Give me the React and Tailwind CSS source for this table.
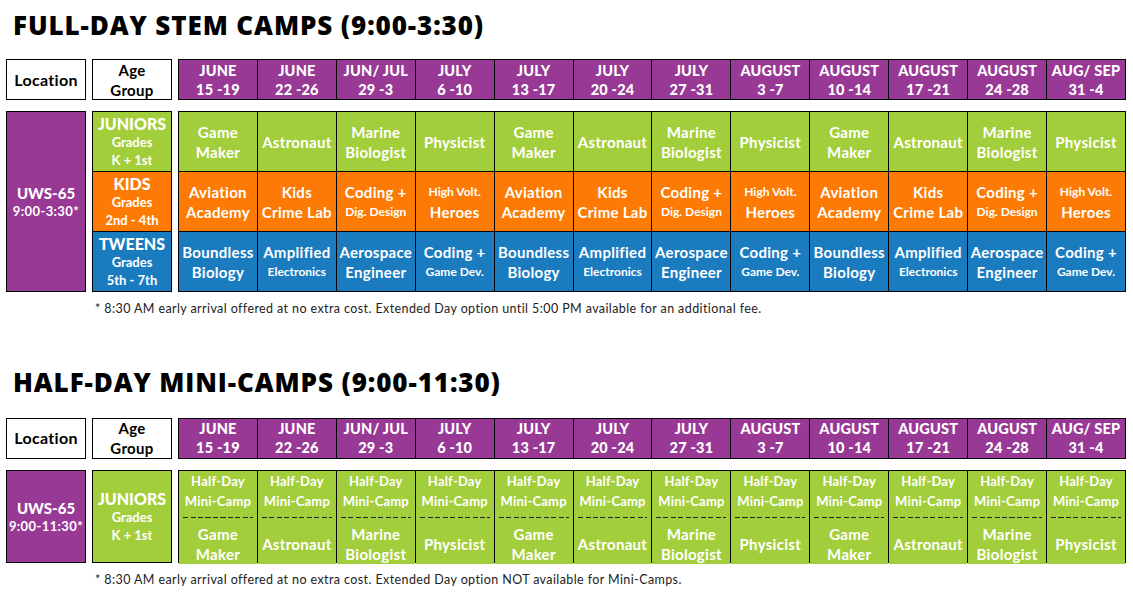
const weeks = [
  ['JUNE', '15 -19'],
  ['JUNE', '22 -26'],
  ['JUN/ JUL', '29 -3'],
  ['JULY', '6 -10'],
  ['JULY', '13 -17'],
  ['JULY', '20 -24'],
  ['JULY', '27 -31'],
  ['AUGUST', '3 -7'],
  ['AUGUST', '10 -14'],
  ['AUGUST', '17 -21'],
  ['AUGUST', '24 -28'],
  ['AUG/ SEP', '31 -4'],
];

// each camp: list of [text, small]
const juniors = [
  [['Game'], ['Maker']],
  [['Astronaut']],
  [['Marine'], ['Biologist']],
  [['Physicist']],
];
const kids = [
  [['Aviation'], ['Academy']],
  [['Kids'], ['Crime Lab']],
  [['Coding +'], ['Dig. Design', true]],
  [['High Volt.', true], ['Heroes']],
];
const tweens = [
  [['Boundless'], ['Biology']],
  [['Amplified'], ['Electronics', true]],
  [['Aerospace'], ['Engineer']],
  [['Coding +'], ['Game Dev.', true]],
];

const repeat = (arr) => [...arr, ...arr, ...arr];

const rows = [
  { name: 'JUNIORS', grades: 'K + 1st', bg: 'bg-[#a3ce3b]', camps: repeat(juniors) },
  { name: 'KIDS', grades: '2nd - 4th', bg: 'bg-[#fd7b04]', camps: repeat(kids) },
  { name: 'TWEENS', grades: '5th - 7th', bg: 'bg-[#1b7bbf]', camps: repeat(tweens) },
];

function Title({ children }) {
  return (
    <h1
      className="pl-[7px] text-[26px] font-extrabold leading-none tracking-[0.9px] text-black"
      style={{ fontFamily: '"Open Sans", Lato, sans-serif' }}
    >
      {children}
    </h1>
  );
}

function HeaderRow() {
  return (
    <div className="flex gap-[6px]">
      <div className="w-[80px] h-[41px] border border-black bg-white flex items-center justify-center text-[16px] font-bold tracking-[0.3px]">
        Location
      </div>
      <div className="w-[80px] h-[41px] border border-black bg-white flex flex-col items-center justify-center text-[15px] font-bold leading-[20px] tracking-[0.3px]">
        <span>Age</span>
        <span>Group</span>
      </div>
      <div className="w-[948px] h-[41px] border border-black bg-black grid grid-cols-12 gap-px">
        {weeks.map(([m, d], i) => (
          <div key={i} className="bg-[#983996] text-white font-black text-[14.5px] leading-[19px] flex flex-col items-center justify-center tracking-[0.2px]">
            <span>{m}</span>
            <span>{d}</span>
          </div>
        ))}
      </div>
    </div>
  );
}

function Camp({ lines }) {
  return (
    <div className="flex flex-col items-center justify-center">
      {lines.map(([t, small], i) => (
        <span key={i} className={small ? 'text-[12px] leading-[20px]' : 'text-[15px] leading-[20px] tracking-[0.3px]'}>
          {t}
        </span>
      ))}
    </div>
  );
}

function Footnote({ children }) {
  return <p className="pl-[89px] text-[12.5px] tracking-[0.4px] text-[#222] leading-none">{children}</p>;
}

function Location({ time, h }) {
  return (
    <div className={`w-[80px] ${h} border border-black bg-[#983996] flex flex-col items-center justify-center`}>
      <span className="text-[15px] font-black leading-[20px]">UWS-65</span>
      <span className="text-[13px] font-bold leading-[17px] tracking-[0.4px]">{time}</span>
    </div>
  );
}

export default function App() {
  return (
    <div className="w-[1133px] h-[594px] bg-white pl-[6px] pt-[12px]" style={{ fontFamily: 'Lato, "Open Sans", sans-serif' }}>
      <Title>FULL-DAY STEM CAMPS (9:00-3:30)</Title>
      <div className="mt-[21px]">
        <HeaderRow />
      </div>

      <div className="mt-[11px] flex gap-[6px] text-white">
        <Location time="9:00-3:30*" h="h-[181px]" />
        <div className="w-[80px] h-[181px] border border-black bg-black flex flex-col gap-px">
          {rows.map((r) => (
            <div key={r.name} className={`flex-1 ${r.bg} flex flex-col items-center justify-center`}>
              <span className="text-[16px] font-black leading-[19px]">{r.name}</span>
              <span className="text-[13px] font-bold leading-[18px]">Grades</span>
              <span className="text-[13px] font-bold leading-[18px]">{r.grades}</span>
            </div>
          ))}
        </div>
        <div className="w-[948px] h-[181px] border border-black bg-black grid grid-cols-12 grid-rows-3 gap-px font-bold">
          {rows.map((r) =>
            r.camps.map((c, i) => (
              <div key={r.name + i} className={`${r.bg} flex items-center justify-center`}>
                <Camp lines={c} />
              </div>
            ))
          )}
        </div>
      </div>

      <div className="mt-[11px]">
        <Footnote>
          * 8:30 AM early arrival offered at no extra cost. Extended Day option until 5:00 PM available for an additional fee.
        </Footnote>
      </div>

      <div className="mt-[53px]">
        <Title>HALF-DAY MINI-CAMPS (9:00-11:30)</Title>
      </div>
      <div className="mt-[23px]">
        <HeaderRow />
      </div>

      <div className="mt-[11px] flex gap-[6px] text-white">
        <Location time="9:00-11:30*" h="h-[93px]" />
        <div className="w-[80px] h-[93px] border border-black bg-[#a3ce3b] flex flex-col items-center justify-center">
          <span className="text-[16px] font-black leading-[19px]">JUNIORS</span>
          <span className="text-[13px] font-bold leading-[18px]">Grades</span>
          <span className="text-[13px] font-bold leading-[18px]">K + 1st</span>
        </div>
        <div className="w-[948px] h-[93px] border border-black bg-black grid grid-cols-12 gap-px font-bold">
          {repeat(juniors).map((c, i) => (
            <div key={i} className="bg-[#a3ce3b] flex flex-col items-stretch">
              <div className="flex flex-col items-center text-[13px] leading-[20px] tracking-[0.2px]">
                <span>Half-Day</span>
                <span>Mini-Camp</span>
              </div>
              <div className="mt-[6px] mx-[4px] h-px bg-[repeating-linear-gradient(to_right,#222_0_5px,transparent_5px_7.5px)]" />
              <div className="flex-1 pt-[6px] flex items-center justify-center">
                <Camp lines={c} />
              </div>
            </div>
          ))}
        </div>
      </div>

      <div className="mt-[11px]">
        <Footnote>
          * 8:30 AM early arrival offered at no extra cost. Extended Day option NOT available for Mini-Camps.
        </Footnote>
      </div>
    </div>
  );
}
